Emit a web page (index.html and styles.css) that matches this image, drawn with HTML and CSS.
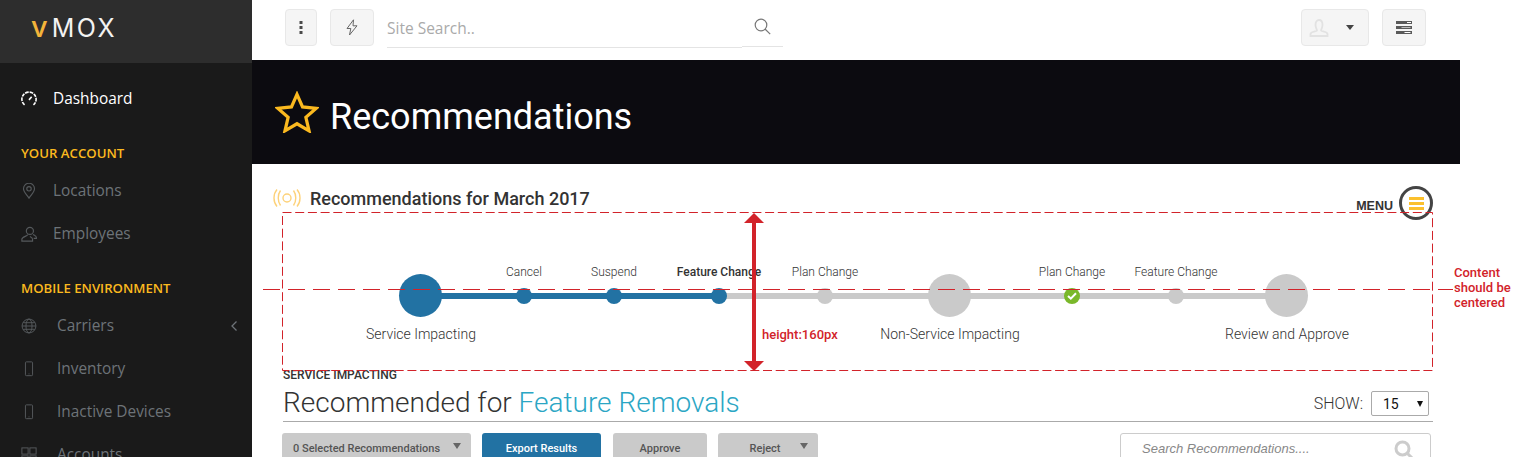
FILE: index.html
```html
<!DOCTYPE html>
<html lang="en">
<head>
  <meta charset="UTF-8">
  <title>Recommendations</title>
  <link rel="stylesheet" href="styles.css">
</head>
<body>
  <aside class="sidebar">
    <div class="logo"><span class="logo-v">v</span><span class="logo-text">MOX</span></div>
    <nav class="nav">
      <a class="nav-item nav-active">
        <svg class="nav-icon" viewBox="0 0 18 18" fill="none" stroke="currentColor" stroke-width="1.800"><path d="M4 15.500A8 8 0 1 1 14 15.500" stroke-dasharray="4 1"/><path d="M9 10l3-3.500"/></svg>
        <span>Dashboard</span>
      </a>
      <h4 class="nav-title">YOUR ACCOUNT</h4>
      <a class="nav-item">
        <svg class="nav-icon" viewBox="0 0 18 18" fill="none" stroke="currentColor" stroke-width="1.300"><path d="M9 17C6 12.500 2.800 10 2.800 6.500a6.200 6.200 0 0 1 12.400 0c0 3.500-3.200 6-6.200 10.500z"/><circle cx="9" cy="6.500" r="2.500"/></svg>
        <span>Locations</span>
      </a>
      <a class="nav-item">
        <svg class="nav-icon" viewBox="0 0 18 18" fill="none" stroke="currentColor" stroke-width="1.300"><circle cx="10" cy="5.500" r="4"/><path d="M7.500 9.500c0 2-6.500 2.500-6.500 5.500v2h12v-2c0-1.500-1.500-2.500-3-3.200M13.500 9.500c1.500 1 3.800 1.500 3.800 3.500v1h-3"/></svg>
        <span>Employees</span>
      </a>
      <h4 class="nav-title">MOBILE ENVIRONMENT</h4>
      <a class="nav-item nav-item-wide">
        <svg class="nav-icon" viewBox="0 0 18 18" fill="none" stroke="currentColor" stroke-width="1.100"><circle cx="9" cy="9" r="7.800"/><ellipse cx="9" cy="9" rx="3.400" ry="7.800"/><path d="M1.200 9h15.600M2.400 5.300h13.200M2.400 12.700h13.200"/></svg>
        <span>Carriers</span>
        <svg class="nav-chevron" viewBox="0 0 8 12" fill="none" stroke="currentColor" stroke-width="1.300"><path d="M6.500 1.500L2 6l4.500 4.500"/></svg>
      </a>
      <a class="nav-item nav-item-wide">
        <svg class="nav-icon" viewBox="0 0 18 18" fill="none" stroke="currentColor" stroke-width="1.100"><rect x="5" y="1" width="8" height="15.500" rx="1"/><path d="M8.500 14.500h1"/></svg>
        <span>Inventory</span>
      </a>
      <a class="nav-item nav-item-wide">
        <svg class="nav-icon" viewBox="0 0 18 18" fill="none" stroke="currentColor" stroke-width="1.100"><rect x="5" y="1" width="8" height="15.500" rx="1"/><path d="M8.500 14.500h1"/></svg>
        <span>Inactive Devices</span>
      </a>
      <a class="nav-item nav-item-wide">
        <svg class="nav-icon" viewBox="0 0 18 18" fill="none" stroke="currentColor" stroke-width="1.100"><rect x="1" y="1" width="7" height="7"/><rect x="10" y="1" width="7" height="7"/><rect x="1" y="10" width="7" height="7"/><rect x="10" y="10" width="7" height="7"/></svg>
        <span>Accounts</span>
      </a>
    </nav>
  </aside>

  <main class="main">
    <header class="topbar">
      <button class="tool-btn tool-dots"><svg width="4" height="13" viewBox="0 0 4 13" fill="#4a4a4a"><rect x=".5" y="0" width="3" height="3"/><rect x=".5" y="5" width="3" height="3"/><rect x=".5" y="10" width="3" height="3"/></svg></button>
      <button class="tool-btn tool-bolt"><svg width="12" height="17" viewBox="0 0 12 17" fill="none" stroke="#666" stroke-width="1"><path d="M7.500 .8L1 9.500h3.800L3.500 16 11 6.800H7z"/></svg></button>
      <div class="site-search">
        <div class="site-search-input">Site Search..</div>
        <div class="site-search-btn"><svg width="17" height="17" viewBox="0 0 17 17" fill="none" stroke="#777" stroke-width="1.200"><circle cx="7" cy="7" r="5.800"/><path d="M11 11l5.200 5.200"/></svg></div>
      </div>
      <button class="tool-btn tool-user">
        <svg width="20" height="18" viewBox="0 0 20 18" fill="none" stroke="#e2e2e2" stroke-width="1.800"><path d="M6.500 6C6.500 3 8 1 10 1s3.500 2 3.500 5c0 3-1.500 4.500-1.500 5.500 0 1 6.500 1 6.500 3.500V17h-17v-2c0-2.500 6.500-2.500 6.500-3.500S6.500 9 6.500 6z"/></svg>
        <span class="caret-small"></span>
      </button>
      <button class="tool-btn tool-server"><svg width="16" height="13" viewBox="0 0 16 13"><rect width="16" height="3" fill="#5a5a5a"/><rect y="5" width="16" height="3" fill="#5a5a5a"/><rect y="10" width="16" height="3" fill="#5a5a5a"/><rect x="11" y="1" width="4" height="1" fill="#fff"/><rect x="5.500" y="6" width="9" height="1" fill="#bbb"/><rect x="8.500" y="11" width="6" height="1" fill="#fff"/></svg></button>
    </header>

    <div class="hero">
      <svg class="hero-star" width="44" height="42" viewBox="0 0 46 44" fill="none" stroke="#fbb91f" stroke-width="3.400" stroke-linejoin="miter"><path d="M23 3.500l5.800 13.200 14.400 1.400-10.900 9.500 3.300 14.100L23 34.300l-12.600 7.400 3.300-14.100L2.800 18.100l14.400-1.400z"/></svg>
      <h1 class="hero-title">Recommendations</h1>
    </div>

    <section class="content">
      <div class="content-head">
        <svg class="signal-icon" width="28" height="18" viewBox="0 0 28 18" fill="none" stroke="#fdd27a" stroke-width="1.400"><circle cx="14" cy="9" r="4"/><path d="M7.500 1.500C4.500 5.500 4.500 12.500 7.500 16.500M4 .5C0 5 0 13 4 17.500M20.500 1.500c3 4 3 11 0 15M24 .5c4 4.500 4 12.500 0 17"/></svg>
        <h2 class="content-title">Recommendations for March 2017</h2>
        <div class="menu">
          <span class="menu-label">MENU</span>
          <span class="menu-btn"><i></i><i></i><i></i></span>
        </div>
      </div>

      <div class="stepper">
        <div class="step step-done">
          <div class="step-inner">
            <span class="step-top"></span>
            <span class="step-node"><span class="dot dot-big dot-blue"></span></span>
            <span class="step-bottom">Service Impacting</span>
          </div>
        </div>
        <div class="step step-done">
          <div class="step-inner">
            <span class="step-top">Cancel</span>
            <span class="step-node"><span class="dot dot-blue"></span></span>
          </div>
        </div>
        <div class="step step-done">
          <div class="step-inner">
            <span class="step-top">Suspend</span>
            <span class="step-node"><span class="dot dot-blue"></span></span>
          </div>
        </div>
        <div class="step">
          <div class="step-inner">
            <span class="step-top step-current">Feature Change</span>
            <span class="step-node"><span class="dot dot-blue"></span></span>
          </div>
        </div>
        <div class="step">
          <div class="step-inner">
            <span class="step-top">Plan Change</span>
            <span class="step-node"><span class="dot"></span></span>
          </div>
        </div>
        <div class="step">
          <div class="step-inner">
            <span class="step-top"></span>
            <span class="step-node"><span class="dot dot-big"></span></span>
            <span class="step-bottom">Non-Service Impacting</span>
          </div>
        </div>
        <div class="step">
          <div class="step-inner">
            <span class="step-top">Plan Change</span>
            <span class="step-node"><span class="dot dot-green"><svg width="10" height="8" viewBox="0 0 10 8" fill="none" stroke="#fff" stroke-width="2"><path d="M1 4l2.800 2.600L9 1.200"/></svg></span></span>
          </div>
        </div>
        <div class="step">
          <div class="step-inner">
            <span class="step-top">Feature Change</span>
            <span class="step-node"><span class="dot"></span></span>
          </div>
        </div>
        <div class="step step-last">
          <div class="step-inner">
            <span class="step-top"></span>
            <span class="step-node"><span class="dot dot-big"></span></span>
            <span class="step-bottom">Review and Approve</span>
          </div>
        </div>
      </div>

      <div class="eyebrow">SERVICE IMPACTING</div>
      <div class="rec-head">
        <h2 class="rec-title">Recommended for <span class="rec-accent">Feature Removals</span></h2>
        <div class="show">
          <span class="show-label">SHOW:</span>
          <div class="show-select"><span>15</span><i class="caret-black"></i></div>
        </div>
      </div>

      <div class="toolbar">
        <button class="btn btn-select">0 Selected Recommendations<i class="caret-grey"></i></button>
        <button class="btn btn-export">Export Results</button>
        <button class="btn btn-approve">Approve</button>
        <button class="btn btn-reject">Reject<i class="caret-grey"></i></button>
        <div class="rec-search">
          <span class="rec-search-text">Search Recommendations....</span>
          <svg width="20" height="20" viewBox="0 0 20 20" fill="none" stroke="#ccc" stroke-width="3"><circle cx="8.500" cy="8.500" r="6.500"/><path d="M13 13l6 6"/></svg>
        </div>
      </div>

      <!-- design notes drawn over the page -->
      <svg class="note-box" width="1151" height="159" fill="none" stroke="#d2232a"><rect x=".5" y=".5" width="1150" height="158" stroke-dasharray="9 3.700"/></svg>
      <div class="note-center"></div>
      <div class="note-arrow"></div>
      <div class="note-height">height:160px</div>
      <div class="note-text">Content<br>should be<br>centered</div>
    </section>
  </main>
</body>
</html>
```

FILE: styles.css
```css
* {
  box-sizing: border-box;
}
html, body {
  height: 100%;
}
body {
  margin: 0;
  display: flex;
  overflow: hidden;
  background: #fff;
  font-family: 'Roboto', sans-serif;
  color: #333;
}
h1, h2, h4 {
  margin: 0;
}

/* sidebar */
.sidebar {
  width: 252px;
  flex-shrink: 0;
  background: #1a1a1a;
  font-family: 'Open Sans', sans-serif;
}
.logo {
  height: 63px;
  background: #2d2d2d;
  display: flex;
  align-items: baseline;
  padding: 13px 0 0 31px;
  font-family: 'Inter', sans-serif;
  line-height: 28px;
}
.logo-v {
  color: #f3b43a;
  font-size: 29px;
  font-weight: 500;
  margin-right: 4px;
}
.logo-text {
  color: #f2f2f2;
  font-size: 25px;
  font-weight: 400;
  letter-spacing: 2.500px;
}
.nav {
  padding: 14px 0 0 21px;
}
.nav-item {
  height: 43px;
  display: flex;
  align-items: center;
  color: #6d7378;
  font-size: 15.400px;
}
.nav-active {
  color: #fff;
}
.nav-icon {
  width: 16px;
  height: 16px;
  margin-right: 16px;
  color: #55595c;
}
.nav-active .nav-icon {
  color: #fff;
}
.nav-item-wide .nav-icon {
  margin-right: 20px;
}
.nav-chevron {
  width: 8px;
  height: 12px;
  margin-left: auto;
  margin-right: 14px;
}
.nav-title {
  color: #fbb91f;
  font-size: 13.200px;
  font-weight: 600;
  line-height: 18px;
  margin-top: 24px;
  margin-bottom: 7px;
}

/* top bar */
.main {
  flex: 1;
  min-width: 0;
}
.topbar {
  height: 60px;
  display: flex;
  align-items: flex-start;
  padding: 9px 103px 0 33px;
}
.tool-btn {
  height: 37px;
  padding: 0;
  background: #f5f5f5;
  border: 1px solid #e8e8e8;
  border-radius: 4px;
  display: flex;
  align-items: center;
  justify-content: center;
}
.tool-dots {
  width: 32px;
}
.tool-bolt {
  width: 44px;
  margin-left: 13px;
}
.tool-user {
  width: 68px;
  margin-left: auto;
  justify-content: flex-start;
  padding-left: 7px;
  gap: 17px;
}
.tool-server {
  width: 44px;
  margin-left: 13px;
}
.caret-small {
  width: 0;
  height: 0;
  border-left: 4.500px solid transparent;
  border-right: 4.500px solid transparent;
  border-top: 5px solid #444;
}
.site-search {
  width: 396px;
  height: 38px;
  margin-left: 13px;
  display: flex;
}
.site-search-input {
  width: 355px;
  height: 39px;
  border-bottom: 1px solid #e4e4e4;
  color: #aaa;
  font-family: 'Open Sans', sans-serif;
  font-size: 15.500px;
  line-height: 39px;
}
.site-search-btn {
  width: 41px;
  height: 38px;
  border-bottom: 1px solid #e4e4e4;
  padding: 9px 0 0 12px;
}

/* hero */
.hero {
  width: 1208px;
  height: 104px;
  background: #0c0b10;
  display: flex;
  align-items: center;
  padding-left: 23px;
}
.hero-star {
  flex-shrink: 0;
}
.hero-title {
  color: #fff;
  font-size: 36px;
  font-weight: 400;
  line-height: 44px;
  margin: 10px 0 0 11px;
}

/* content */
.content {
  position: relative;
  width: 1181px;
  padding: 22px 0 0 31px;
}
.content-head {
  height: 34px;
  display: flex;
  align-items: flex-start;
}
.signal-icon {
  margin: 3px 9px 0 -10px;
}
.content-title {
  font-size: 18px;
  font-weight: 500;
  line-height: 26px;
  color: #333;
}
.menu {
  margin-left: auto;
  display: flex;
  align-items: center;
  gap: 6px;
  height: 34px;
}
.menu-label {
  font-family: 'Liberation Sans', sans-serif;
  font-size: 12.500px;
  font-weight: 700;
  padding-top: 6px;
  color: #333;
}
.menu-btn {
  width: 34px;
  height: 34px;
  border: 3px solid #444;
  border-radius: 50%;
  display: flex;
  flex-direction: column;
  justify-content: center;
  align-items: center;
  gap: 2px;
}
.menu-btn i {
  width: 15px;
  height: 3px;
  background: #fbc02d;
}

/* stepper */
.stepper {
  display: grid;
  grid-template-columns: 104px 90px 105px 106px 124px 123px 104px 110px 0;
  height: 105px;
  margin: 44px 0 0 137px;
  align-items: start;
}
.step {
  position: relative;
}
.step::before {
  content: "";
  position: absolute;
  left: 0;
  right: 0;
  top: 29px;
  height: 6px;
  background: #cacaca;
}
.step-done::before {
  background: #2272a3;
}
.step-last::before {
  display: none;
}
.step-inner {
  position: relative;
  width: 0;
  display: flex;
  flex-direction: column;
  align-items: center;
  white-space: nowrap;
}
.step-top {
  height: 14px;
  line-height: 16px;
  margin-bottom: -4px;
  font-size: 12px;
  font-weight: 300;
  color: #333;
}
.step-current {
  font-weight: 500;
}
.step-node {
  height: 43px;
  display: flex;
  align-items: center;
  justify-content: center;
}
.step-bottom {
  margin-top: 8px;
  padding-left: 2px;
  line-height: 18px;
  font-size: 14px;
  font-weight: 300;
  color: #333;
}
.dot {
  width: 16px;
  height: 16px;
  border-radius: 50%;
  background: #cacaca;
  flex-shrink: 0;
  display: flex;
  align-items: center;
  justify-content: center;
}
.dot-big {
  width: 43px;
  height: 43px;
}
.dot-blue {
  background: #2272a3;
}
.dot-green {
  background: #7ab82a;
}

/* recommendations list */
.eyebrow {
  font-size: 12px;
  font-weight: 500;
  line-height: 12px;
  color: #333;
}
.rec-head {
  height: 41px;
  border-bottom: 1px solid #aaa;
  display: flex;
  justify-content: space-between;
  align-items: flex-start;
}
.rec-title {
  font-size: 28px;
  font-weight: 300;
  line-height: 34px;
  margin-top: 5px;
  color: #333;
}
.rec-accent {
  color: #2ba6c4;
}
.show {
  display: flex;
  align-items: center;
  margin: 10px 4px 0 0;
}
.show-label {
  font-size: 16px;
  font-weight: 300;
  margin-right: 8px;
}
.show-select {
  width: 58px;
  height: 25px;
  border: 1px solid #aaa;
  border-radius: 2px;
  display: flex;
  align-items: center;
  justify-content: space-between;
  padding: 0 5px 0 11px;
  font-size: 14px;
  color: #111;
}
.caret-black {
  width: 0;
  height: 0;
  border-left: 3.500px solid transparent;
  border-right: 3.500px solid transparent;
  border-top: 6px solid #111;
}
.toolbar {
  display: flex;
  margin-top: 11px;
  gap: 11px;
}
.btn {
  height: 36px;
  border: 0;
  border-radius: 3px;
  background: #cacaca;
  color: #555;
  font-family: 'Roboto', sans-serif;
  font-size: 11px;
  font-weight: 500;
  position: relative;
  display: flex;
  justify-content: center;
  padding: 9px 0 0;
}
.btn-select {
  width: 189px;
  justify-content: flex-start;
  padding-left: 11px;
  margin-left: -1px;
}
.btn-export {
  width: 119px;
  background: #2272a3;
  color: #fff;
}
.btn-approve {
  width: 94px;
  margin-left: 1px;
}
.btn-reject {
  width: 100px;
  padding-right: 6px;
}
.caret-grey {
  position: absolute;
  top: 10px;
  right: 10px;
  width: 0;
  height: 0;
  border-left: 4.500px solid transparent;
  border-right: 4.500px solid transparent;
  border-top: 6px solid #666;
}
.rec-search {
  width: 311px;
  height: 36px;
  margin-left: auto;
  margin-right: 2px;
  border: 1px solid #ccc;
  border-radius: 3px;
  display: flex;
  justify-content: space-between;
  padding: 6px 16px 0 21px;
}
.rec-search-text {
  font-family: 'Liberation Sans', sans-serif;
  font-size: 13px;
  font-style: italic;
  color: #888;
  line-height: 18px;
}

/* red design notes */
.note-box {
  position: absolute;
  left: 30px;
  top: 48px;
}
.note-center {
  position: absolute;
  left: 11px;
  top: 125px;
  width: 1190px;
  height: 1px;
  background: repeating-linear-gradient(to right, #d2232a 0 17px, transparent 17px 25px);
}
.note-arrow {
  position: absolute;
  left: 500px;
  top: 54px;
  width: 4px;
  height: 148px;
  background: #d2232a;
}
.note-arrow::before,
.note-arrow::after {
  content: "";
  position: absolute;
  left: -8px;
  width: 0;
  height: 0;
  border-left: 10px solid transparent;
  border-right: 10px solid transparent;
}
.note-arrow::before {
  top: -5px;
  border-bottom: 10px solid #d2232a;
}
.note-arrow::after {
  bottom: -5px;
  border-top: 10px solid #d2232a;
}
.note-height {
  position: absolute;
  left: 510px;
  top: 163px;
  font-size: 13px;
  font-weight: 500;
  line-height: 16px;
  color: #d2232a;
}
.note-text {
  position: absolute;
  left: 1202px;
  top: 101px;
  font-size: 13px;
  font-weight: 500;
  line-height: 15px;
  color: #d2232a;
  white-space: nowrap;
}
```
